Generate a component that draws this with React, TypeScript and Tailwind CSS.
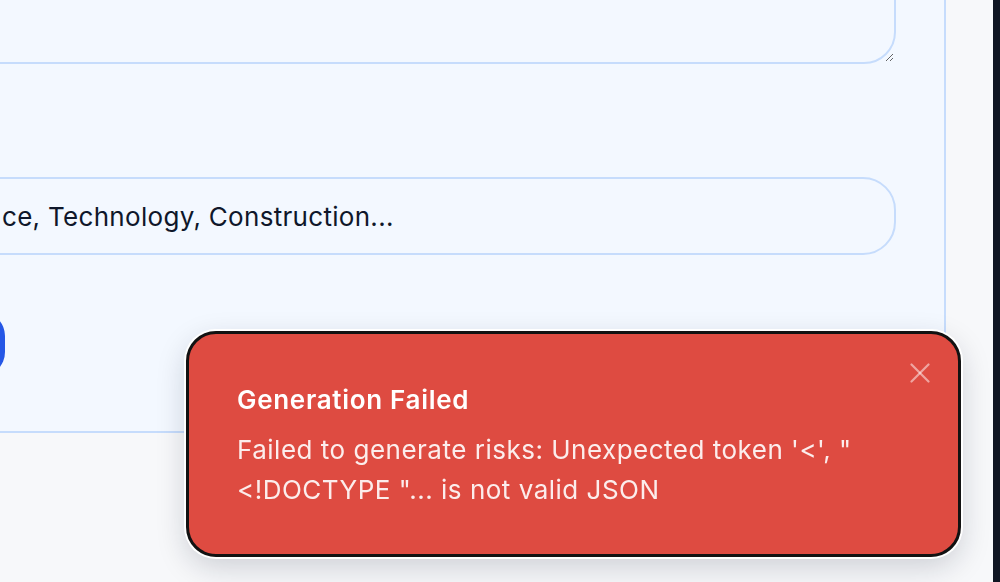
import * as React from "react";

// Error toast over the tail end of a "generate risks" form.
const FONT = { fontFamily: "Inter, 'Noto Sans', sans-serif" };

function Toast() {
  return (
    <div
      role="alert"
      className="fixed right-[39px] bottom-[25px] w-[775px] rounded-[30px] border-[3px] border-[#121212] bg-[#de4b41] pl-[48px] pr-[60px] pt-[50px] pb-[44px] text-white ring-2 ring-white shadow-[0_10px_30px_rgba(15,23,42,0.18)]"
    >
      <button
        type="button"
        aria-label="Close"
        className="absolute top-[29px] right-[28px] text-white/50"
      >
        <svg width="20" height="20" viewBox="0 0 20 20" fill="none" stroke="currentColor" strokeWidth="2.2" strokeLinecap="round">
          <path d="M1.5 1.5 18.5 18.5" />
          <path d="M18.5 1.5 1.5 18.5" />
        </svg>
      </button>
      <p className="text-[26px] leading-[32px] font-semibold tracking-[0.7px]">Generation Failed</p>
      <p className="mt-[14px] text-[26px] leading-[40px] tracking-[0.5px] text-white/90">
        Failed to generate risks: Unexpected token '&lt;', "&lt;!DOCTYPE "... is not valid JSON
      </p>
    </div>
  );
}

export default function App() {
  return (
    <div className="relative flex h-[582px] w-full overflow-hidden bg-[#f7f8fa]" style={FONT}>
      <div className="flex-1">
        {/* Form card, left and top edges run off screen */}
        <div className="-mt-[100px] -ml-[100px] w-[1046px] rounded-3xl border-2 border-[#c6dcfc] bg-[#f3f8ff] px-[48px] pt-[48px] pb-[55px]">
          <textarea
            readOnly
            className="block h-[114px] w-full resize-y rounded-[32px] border-2 border-[#c6dcfc] bg-[#f3f8ff] outline-none"
          />
          <input
            readOnly
            value="ce, Technology, Construction..."
            className="mt-[113px] block h-[78px] w-full rounded-[33px] border-2 border-[#c6dcfc] bg-[#f3f8ff] pl-[50px] text-[26px] tracking-[0.3px] text-[#0f172a] outline-none"
          />
          <button
            type="button"
            className="mt-[57px] block h-[64px] w-[55px] rounded-3xl bg-[#2557e6]"
          />
        </div>
      </div>
      <div className="w-[7px] bg-[#0f1522]" />
      <Toast />
    </div>
  );
}
